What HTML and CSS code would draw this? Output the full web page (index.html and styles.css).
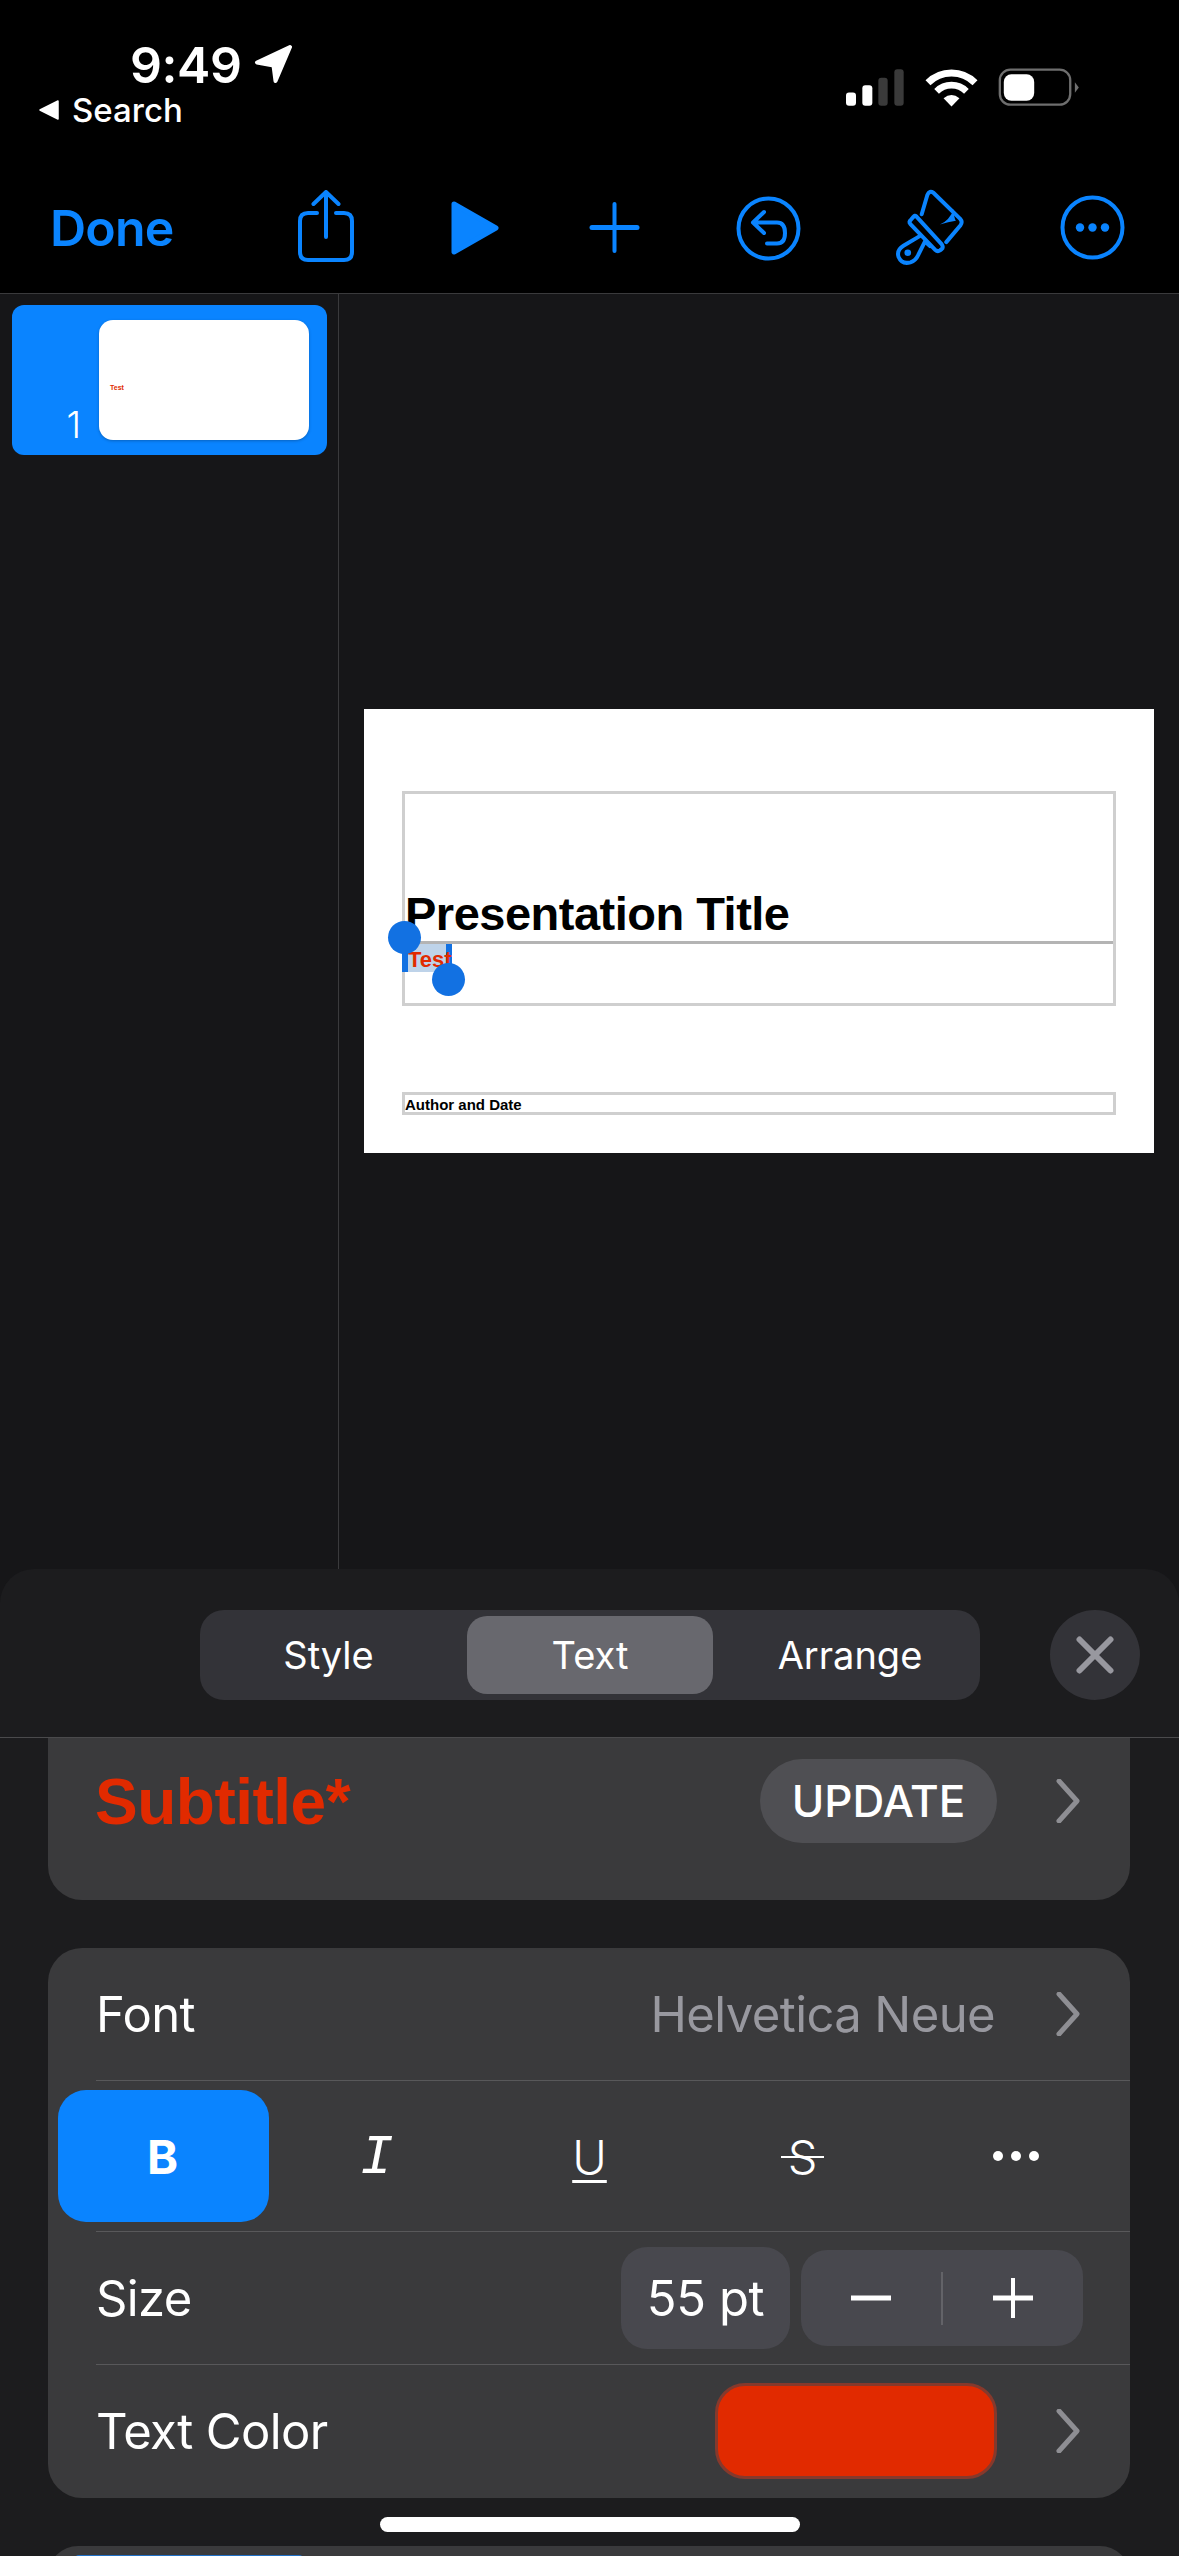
FILE: index.html
```html
<!DOCTYPE html>
<html lang="en">
<head>
    <meta charset="UTF-8">
    <meta name="viewport" content="width=device-width, initial-scale=1.0">
    <title>Keynote Text Panel</title>
    <link rel="stylesheet" href="styles.css">
</head>
<body>
    <div class="status">
        <div class="status-left">
            <div class="clock">
                <span class="time">9:49</span>
                <svg class="location" viewBox="0 0 39 38"><path d="M36 2 3 17.500 19.500 20.500 21.500 36Z" fill="#fff" stroke="#fff" stroke-width="4" stroke-linejoin="round"/></svg>
            </div>
            <div class="back">
                <svg class="back-arrow" viewBox="0 0 20 20"><path d="M19 1V19L1 10Z" fill="#fff" stroke="#fff" stroke-width="1.500" stroke-linejoin="round"/></svg>
                <span>Search</span>
            </div>
        </div>
        <div class="status-right">
            <svg class="signal" viewBox="48 42 174 110">
                <rect x="48" y="112" width="30" height="40" rx="9" fill="#fff"/>
                <rect x="97" y="90" width="30" height="62" rx="9" fill="#fff"/>
                <rect x="145" y="68" width="28" height="84" rx="9" fill="#3a3a3a"/>
                <rect x="193" y="42" width="28" height="110" rx="9" fill="#3a3a3a"/>
            </svg>
            <svg class="wifi" viewBox="285 40 160 114">
                <path d="M294 81A100 100 0 0 1 436 81" fill="none" stroke="#fff" stroke-width="21"/>
                <path d="M320 107A64 64 0 0 1 410 107" fill="none" stroke="#fff" stroke-width="20"/>
                <path d="M365 153 341 128Q365 108 389 128Z" fill="#fff"/>
            </svg>
            <svg class="battery" viewBox="505 38 250 118">
                <rect x="513" y="43" width="213" height="106" rx="32" fill="none" stroke="#6e6e6e" stroke-width="7"/>
                <rect x="525" y="57" width="92" height="80" rx="23" fill="#fff"/>
                <path d="M740 81 752 97 740 113Z" fill="#6e6e6e"/>
            </svg>
        </div>
    </div>

    <div class="toolbar">
        <span class="done">Done</span>
        <svg class="tool share" viewBox="0 0 56 72" fill="none" stroke="#0a84ff" stroke-width="4" stroke-linecap="round" stroke-linejoin="round">
            <path d="M19 23H10Q2 23 2 31V62Q2 70 10 70H46Q54 70 54 62V31Q54 23 46 23H38"/>
            <path d="M28 47V3M15.500 14 28 2 40.500 14"/>
        </svg>
        <svg class="tool play" viewBox="0 0 48 54"><path d="M3 3 45 27 3 51Z" fill="#0a84ff" stroke="#0a84ff" stroke-width="5" stroke-linejoin="round"/></svg>
        <svg class="tool plus" viewBox="0 0 51 51" fill="none" stroke="#0a84ff" stroke-linecap="round">
            <path d="M3 25.500H48" stroke-width="5"/>
            <path d="M25.500 2V49" stroke-width="4"/>
        </svg>
        <svg class="tool undo" viewBox="0 0 65 65" fill="none" stroke="#0a84ff" stroke-width="4" stroke-linecap="round" stroke-linejoin="round">
            <circle cx="32.500" cy="32.500" r="30"/>
            <path d="M28 16 17 26.500 28 37M17 26.500H41Q49 26.500 49 37 49 47.500 41 47.500H31"/>
        </svg>
        <svg class="tool brush" viewBox="520 25 210 235" fill="none" stroke="#0a84ff" stroke-width="12" stroke-linecap="round" stroke-linejoin="round">
            <path d="M600 104 617 46Q623 31 636 40L716 118Q724 127 717 137L674 188"/>
            <path d="M583 110 660 194Q667 204 660 209L655 213Q648 218 640 211L566 134Q560 126 568 120L575 112Q579 106 583 110Z"/>
            <path d="M594 170 545 199Q524 212 530 232 540 256 566 249 582 244 590 226L610 186 625 200"/>
            <circle cx="558" cy="220" r="10" fill="#0a84ff" stroke="none"/>
            <path d="M655 135Q684 122 697 88 696 112 703 124 680 128 655 135Z" fill="#0a84ff" stroke="none"/>
        </svg>
        <svg class="tool more" viewBox="0 0 65 65" fill="none" stroke="#0a84ff" stroke-width="4">
            <circle cx="32.500" cy="32.500" r="30"/>
            <g fill="#0a84ff" stroke="none">
                <circle cx="20" cy="32.500" r="4.200"/>
                <circle cx="32.500" cy="32.500" r="4.200"/>
                <circle cx="45" cy="32.500" r="4.200"/>
            </g>
        </svg>
    </div>

    <div class="workspace">
        <div class="sidebar">
            <div class="thumb">
                <span class="thumb-num">1</span>
                <div class="thumb-slide"><span class="thumb-text">Test</span></div>
            </div>
        </div>
        <div class="canvas">
            <div class="slide">
                <div class="box title-box"><span class="slide-title">Presentation Title</span></div>
                <div class="box subtitle-box">
                    <span class="selection">Test
                        <span class="handle handle-start"></span>
                        <span class="handle handle-end"></span>
                    </span>
                </div>
                <div class="box author-box">Author and Date</div>
            </div>
        </div>
    </div>

    <div class="panel">
        <div class="panel-head">
            <div class="tabs">
                <span class="tab">Style</span>
                <span class="tab tab-active">Text</span>
                <span class="tab">Arrange</span>
            </div>
            <div class="close">
                <svg viewBox="0 0 38 38"><path d="M3.500 3.500 34.500 34.500M34.500 3.500 3.500 34.500" fill="none" stroke="#98989f" stroke-width="6" stroke-linecap="round"/></svg>
            </div>
        </div>

        <div class="card card-style">
            <span class="style-name">Subtitle*</span>
            <span class="update">UPDATE</span>
            <svg class="chevron" viewBox="0 0 24 44"><path d="M3 2 21 22 3 42" fill="none" stroke="#8e8e93" stroke-width="5" stroke-linecap="round" stroke-linejoin="round"/></svg>
        </div>

        <div class="card card-text">
            <div class="row">
                <span class="label">Font</span>
                <span class="value">Helvetica Neue</span>
                <svg class="chevron" viewBox="0 0 24 44"><path d="M3 2 21 22 3 42" fill="none" stroke="#8e8e93" stroke-width="5" stroke-linecap="round" stroke-linejoin="round"/></svg>
            </div>
            <div class="sep"></div>
            <div class="format-row">
                <span class="format format-on format-b">B</span>
                <span class="format format-i">I</span>
                <span class="format format-u">U</span>
                <span class="format format-s"><span class="strike">S</span></span>
                <span class="format">
                    <svg class="dots" viewBox="0 0 48 12" fill="#fff">
                        <circle cx="6" cy="6" r="5"/>
                        <circle cx="24" cy="6" r="5"/>
                        <circle cx="42" cy="6" r="5"/>
                    </svg>
                </span>
            </div>
            <div class="sep"></div>
            <div class="row">
                <span class="label">Size</span>
                <span class="size-value">55 pt</span>
                <div class="stepper">
                    <svg class="step-icon" viewBox="0 0 42 42"><path d="M1 21H41" stroke="#fff" stroke-width="5"/></svg>
                    <span class="step-line"></span>
                    <svg class="step-icon" viewBox="0 0 42 42"><path d="M1 21H41" stroke="#fff" stroke-width="5"/><path d="M21 1V41" stroke="#fff" stroke-width="4"/></svg>
                </div>
            </div>
            <div class="sep"></div>
            <div class="row">
                <span class="label">Text Color</span>
                <span class="swatch"></span>
                <svg class="chevron" viewBox="0 0 24 44"><path d="M3 2 21 22 3 42" fill="none" stroke="#8e8e93" stroke-width="5" stroke-linecap="round" stroke-linejoin="round"/></svg>
            </div>
        </div>

        <div class="card card-next">
            <div class="next-strip"></div>
        </div>

        <div class="home-bar"></div>
    </div>
</body>
</html>
```

FILE: styles.css
```css
* {
    box-sizing: border-box;
}

body {
    margin: 0;
    width: 1179px;
    height: 2556px;
    overflow: hidden;
    background-color: #161618;
    color: #fff;
    font-family: Inter, 'Noto Sans', sans-serif;
}

svg {
    display: block;
    flex-shrink: 0;
}

/* status bar */
.status {
    height: 180px;
    background-color: #000;
    display: flex;
    justify-content: space-between;
    align-items: flex-start;
}

.status-left {
    padding: 40px 0 0 39px;
}

.clock {
    display: flex;
    align-items: center;
    padding-left: 91px;
    height: 50px;
}

.time {
    font-size: 50px;
    line-height: 50px;
    font-weight: 600;
    width: 124px;
    letter-spacing: -0.4px;
}

.location {
    width: 39px;
    height: 38px;
    margin-top: -3px;
}

.back {
    display: flex;
    align-items: center;
    margin-top: 2px;
    height: 36px;
    font-size: 33px;
    line-height: 36px;
    font-weight: 500;
}

.back-arrow {
    width: 20px;
    height: 20px;
    margin-right: 13px;
}

.status-right {
    display: flex;
    align-items: center;
    padding: 68px 99px 0 0;
}

.signal {
    width: 58px;
    height: 37px;
}

.wifi {
    width: 53px;
    height: 38px;
    margin-left: 21px;
}

.battery {
    width: 83px;
    height: 39px;
    margin-left: 19px;
}

/* toolbar */
.toolbar {
    height: 114px;
    background-color: #000;
    border-bottom: 1px solid #3a3a3c;
    display: flex;
    align-items: flex-start;
    padding: 10px 0 0 50px;
}

.done {
    width: 248px;
    margin-top: 13px;
    color: #0a84ff;
    font-size: 50px;
    line-height: 50px;
    font-weight: 600;
    letter-spacing: -0.8px;
}

.share {
    width: 56px;
    height: 72px;
}

.play {
    width: 48px;
    height: 54px;
    margin: 11px 0 0 97px;
}

.plus {
    width: 51px;
    height: 51px;
    margin: 12px 0 0 90px;
}

.undo {
    width: 65px;
    height: 65px;
    margin: 6px 0 0 96px;
}

.brush {
    width: 70px;
    height: 78px;
    margin: -2px 0 0 94px;
}

.more {
    width: 65px;
    height: 65px;
    margin: 5px 0 0 95px;
}

/* slide area */
.workspace {
    height: 1275px;
    display: flex;
}

.sidebar {
    width: 339px;
    border-right: 1px solid #3a3a3c;
    padding: 11px 11px 0 12px;
}

.thumb {
    height: 150px;
    background-color: #0a84ff;
    border-radius: 12px;
    padding: 15px 18px 15px 0;
    display: flex;
    justify-content: flex-end;
}

.thumb-num {
    align-self: flex-end;
    margin: 0 18px -3px 0;
    font-size: 37px;
    line-height: 37px;
    font-weight: 300;
}

.thumb-slide {
    width: 210px;
    background-color: #fff;
    border-radius: 14px;
    box-shadow: 0 1px 3px rgba(0, 0, 0, 0.25);
    display: flex;
    align-items: center;
    padding: 16px 0 0 11px;
}

.thumb-text {
    color: #e12a00;
    font-family: 'Liberation Sans', Arial, sans-serif;
    font-size: 7px;
    line-height: 8px;
    font-weight: bold;
}

.canvas {
    flex: 1;
    padding: 415px 0 0 25px;
}

.slide {
    width: 790px;
    height: 444px;
    background-color: #fff;
    padding: 82px 38px 0;
    color: #000;
    font-family: 'Liberation Sans', Arial, sans-serif;
    font-weight: bold;
}

.box {
    border: 3px solid #cfcfcf;
    width: 714px;
}

.title-box {
    height: 153px;
    border-bottom-color: #b4b4b4;
    display: flex;
    align-items: flex-end;
    padding: 0 0 4px 0;
}

.slide-title {
    font-size: 47px;
    line-height: 47px;
    letter-spacing: -0.5px;
}

.subtitle-box {
    height: 65px;
    margin-top: -3px;
    border-top: none;
    padding-top: 3px;
}

.selection {
    position: relative;
    display: block;
    width: 50px;
    height: 28px;
    margin-left: -3px;
    background-color: #bed3e9;
    border-left: 6px solid #1271e2;
    border-right: 6px solid #1271e2;
    color: #e12a00;
    font-size: 22px;
    line-height: 31px;
    white-space: nowrap;
}

.handle {
    position: absolute;
    width: 33px;
    height: 33px;
    border-radius: 50%;
    background-color: #1271e2;
}

.handle-start {
    left: -20px;
    top: -23px;
}

.handle-end {
    left: 24px;
    top: 19px;
}

.author-box {
    height: 23px;
    margin-top: 86px;
    font-size: 15px;
    line-height: 19px;
}

/* inspector panel */
.panel {
    position: relative;
    height: 987px;
    background-color: #1c1c1e;
    border-radius: 34px 34px 0 0;
    overflow: hidden;
}

.panel-head {
    height: 169px;
    border-bottom: 1px solid #4a4a4c;
    display: flex;
    align-items: flex-start;
    padding: 41px 0 0 200px;
}

.tabs {
    width: 780px;
    height: 90px;
    background-color: #333338;
    border-radius: 24px;
    padding: 6px 0;
    display: grid;
    grid-template-columns: repeat(3, 1fr);
}

.tab {
    display: flex;
    align-items: center;
    justify-content: center;
    font-size: 38px;
    margin: 0 7px;
    border-radius: 20px;
}

.tab:first-child {
    padding-right: 3px;
}

.tab-active {
    background-color: #68686e;
}

.close {
    width: 90px;
    height: 90px;
    margin-left: 70px;
    border-radius: 50%;
    background-color: #333338;
    display: flex;
    align-items: center;
    justify-content: center;
}

.close svg {
    width: 38px;
    height: 38px;
}

.card {
    width: 1082px;
    margin-left: 48px;
    background-color: #3a3a3c;
    border-radius: 34px;
}

.card-style {
    height: 162px;
    border-radius: 0 0 34px 34px;
    display: flex;
    align-items: flex-start;
    padding: 21px 50px 0 47px;
}

.style-name {
    flex: 1;
    color: #e12a00;
    font-family: 'Liberation Sans', Arial, sans-serif;
    font-size: 64px;
    line-height: 86px;
    font-weight: bold;
    letter-spacing: -0.5px;
}

.update {
    width: 237px;
    height: 84px;
    margin-right: 59px;
    border-radius: 42px;
    background-color: #4f4f53;
    display: flex;
    align-items: center;
    justify-content: center;
    font-size: 44px;
    font-weight: 500;
}

.chevron {
    width: 24px;
    height: 44px;
    margin-top: 20px;
}

.card-text {
    height: 550px;
    margin-top: 48px;
}

.row {
    height: 132px;
    margin-left: 48px;
    padding: 0 50px 0 0;
    display: flex;
    align-items: center;
}

.row .chevron {
    margin-top: 0;
}

.label {
    flex: 1;
    font-size: 49px;
    letter-spacing: -0.6px;
}

.value {
    margin-right: 61px;
    color: #98989f;
    font-size: 49px;
    letter-spacing: -0.6px;
}

.sep {
    height: 1px;
    margin-left: 48px;
    background-color: #58585a;
}

.format-row {
    height: 150px;
    padding: 9px 0 9px 9px;
    display: grid;
    grid-template-columns: repeat(5, 213px);
}

.format {
    display: flex;
    align-items: center;
    justify-content: center;
    margin: 0 1px;
    border-radius: 28px;
    font-size: 47px;
}

.format-on {
    background-color: #0a84ff;
}

.format-b {
    font-weight: 700;
    padding-right: 2px;
}

.format-i {
    font-family: 'Liberation Mono', monospace;
    font-style: italic;
    font-size: 56px;
    padding-top: 3px;
}

.format-u {
    text-decoration: underline;
    text-decoration-thickness: 3px;
    text-underline-offset: 6px;
    font-weight: 300;
}

.format-s {
    font-weight: 300;
}

/* the strike runs wider than the letter */
.strike {
    position: relative;
}

.strike::after {
    content: "";
    position: absolute;
    left: -7px;
    right: -7px;
    top: 50%;
    height: 2px;
    background-color: #fff;
}

.dots {
    width: 48px;
    height: 12px;
}

.size-value {
    width: 169px;
    height: 102px;
    margin-right: 11px;
    border-radius: 26px;
    background-color: #48484e;
    display: flex;
    align-items: center;
    justify-content: center;
    font-size: 49px;
    letter-spacing: -0.4px;
}

.stepper {
    width: 282px;
    height: 96px;
    margin-right: -3px;
    border-radius: 26px;
    background-color: #48484e;
    display: flex;
    align-items: center;
    padding: 0 49px;
    justify-content: space-between;
}

.step-icon {
    width: 42px;
    height: 42px;
}

.step-line {
    width: 2px;
    height: 53px;
    background-color: #636368;
}

.swatch {
    width: 282px;
    height: 96px;
    margin-right: 59px;
    border-radius: 30px;
    background-color: #e12a00;
    border: 3px solid #86392c;
}

.card-next {
    margin-top: 48px;
    height: 60px;
    padding: 9px 0 0 27px;
}

.next-strip {
    width: 228px;
    height: 4px;
    background-color: #1f6fc7;
    border-radius: 4px 4px 0 0;
}

.home-bar {
    position: absolute;
    left: 380px;
    top: 948px;
    width: 420px;
    height: 15px;
    border-radius: 8px;
    background-color: #fff;
}
```
